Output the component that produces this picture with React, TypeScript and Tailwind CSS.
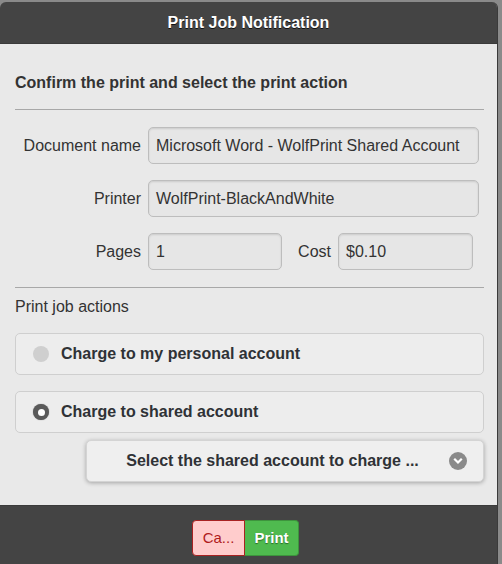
import React from "react";

const labelCls = "text-right text-[16px] text-[#333] leading-5";
const inputCls =
  "h-[37px] flex items-center px-[7px] rounded-[5px] border border-[#bdbdbd] bg-[#e6e6e6] shadow-[inset_0_1px_2px_rgba(0,0,0,0.12)] text-[16px] text-[#333] whitespace-nowrap overflow-hidden";

const Radio = ({ checked }: { checked: boolean }) =>
  checked ? (
    <span className="w-4 h-4 rounded-full bg-[#5a5a5a] shadow-[0_0_1px_rgba(0,0,0,0.5)] flex items-center justify-center">
      <span className="w-[7px] h-[7px] rounded-full bg-white" />
    </span>
  ) : (
    <span className="w-4 h-4 rounded-full bg-[#cfcfcf]" />
  );

const Option = ({ label, checked }: { label: string; checked: boolean }) => (
  <div className="h-[42px] flex items-center gap-[12px] pl-[17px] rounded-[5px] border border-[#cfcfcf] bg-[#ededed]">
    <Radio checked={checked} />
    <span className="text-[16px] font-bold text-[#2f3236]">{label}</span>
  </div>
);

export default function App() {
  return (
    <div
      className="w-full h-[564px] bg-[#8a8a8a] pt-[2px] overflow-hidden"
      style={{ fontFamily: '"Liberation Sans", Arial, sans-serif' }}
    >
      <div className="w-[498px] h-[562px] flex flex-col rounded-t-[6px] overflow-hidden border-r border-[#3a3a3a]">
        {/* header */}
        <div className="h-[42px] shrink-0 bg-[#444] flex items-center justify-center border-b border-[#3b3b3b]">
          <span className="text-white font-bold text-[16px] [text-shadow:0_1px_0_#111]">
            Print Job Notification
          </span>
        </div>

        {/* body */}
        <div className="flex-1 bg-[#e9e9e9] pl-[15px] pr-[13px] pt-[29px]">
          <div className="text-[16px] font-bold text-[#333] leading-5">
            Confirm the print and select the print action
          </div>
          <div className="mt-[16px] border-t border-[#a8a8a8]" />

          <div className="flex flex-col gap-[16px] pt-[17px] pr-[5px]">
            <div className="flex items-center gap-[7px]">
              <span className={`${labelCls} w-[126px]`}>Document name</span>
              <div className={`${inputCls} flex-1`}>Microsoft Word - WolfPrint Shared Account</div>
            </div>
            <div className="flex items-center gap-[7px]">
              <span className={`${labelCls} w-[126px]`}>Printer</span>
              <div className={`${inputCls} flex-1`}>WolfPrint-BlackAndWhite</div>
            </div>
            <div className="flex items-center gap-[7px]">
              <span className={`${labelCls} w-[126px]`}>Pages</span>
              <div className={`${inputCls} w-[134px]`}>1</div>
              <span className={`${labelCls} flex-1`}>Cost</span>
              <div className={`${inputCls} w-[135px] mr-[6px]`}>$0.10</div>
            </div>
          </div>

          <div className="mt-[17px] border-t border-[#a8a8a8]" />
          <div className="mt-[9px] text-[16px] text-[#333] leading-5">Print job actions</div>

          <div className="mt-[16px] flex flex-col gap-[16px]">
            <Option label="Charge to my personal account" checked={false} />
            <Option label="Charge to shared account" checked={true} />
          </div>

          <div className="mt-[7px] ml-[71px] relative h-[42px] flex items-center justify-center pr-[25px] rounded-[5px] border border-[#d4d4d4] bg-[#efefef] shadow-[0_1px_4px_rgba(0,0,0,0.3)]">
            <span className="text-[16px] font-bold text-[#2f3236]">Select the shared account to charge ...</span>
            <span className="absolute right-[16px] top-[11px] w-[18px] h-[18px] rounded-full bg-[#8a8a8a] flex items-center justify-center">
              <svg width="10" height="10" viewBox="0 0 10 10">
                <path d="M2 3.5 L5 6.5 L8 3.5" stroke="white" strokeWidth="2.2" fill="none" strokeLinecap="square" />
              </svg>
            </span>
          </div>
        </div>

        {/* footer */}
        <div className="h-[59px] shrink-0 bg-[#444] border-t border-[#3b3b3b] flex items-start justify-center pt-[14px] pr-[6px]">
          <div className="flex">
            <div className="w-[53px] h-[36px] flex items-center justify-center rounded-l-[4px] bg-[#ffcccc] border border-[#a82222] text-[15px] text-[#b01c1c]">
              Ca...
            </div>
            <div className="w-[54px] h-[36px] flex items-center justify-center rounded-r-[4px] bg-[#4fba4f] border border-[#3d943d] border-l-0 text-[15px] font-bold text-white [text-shadow:0_1px_1px_#2a6a2a]">
              Print
            </div>
          </div>
        </div>
      </div>
    </div>
  );
}
